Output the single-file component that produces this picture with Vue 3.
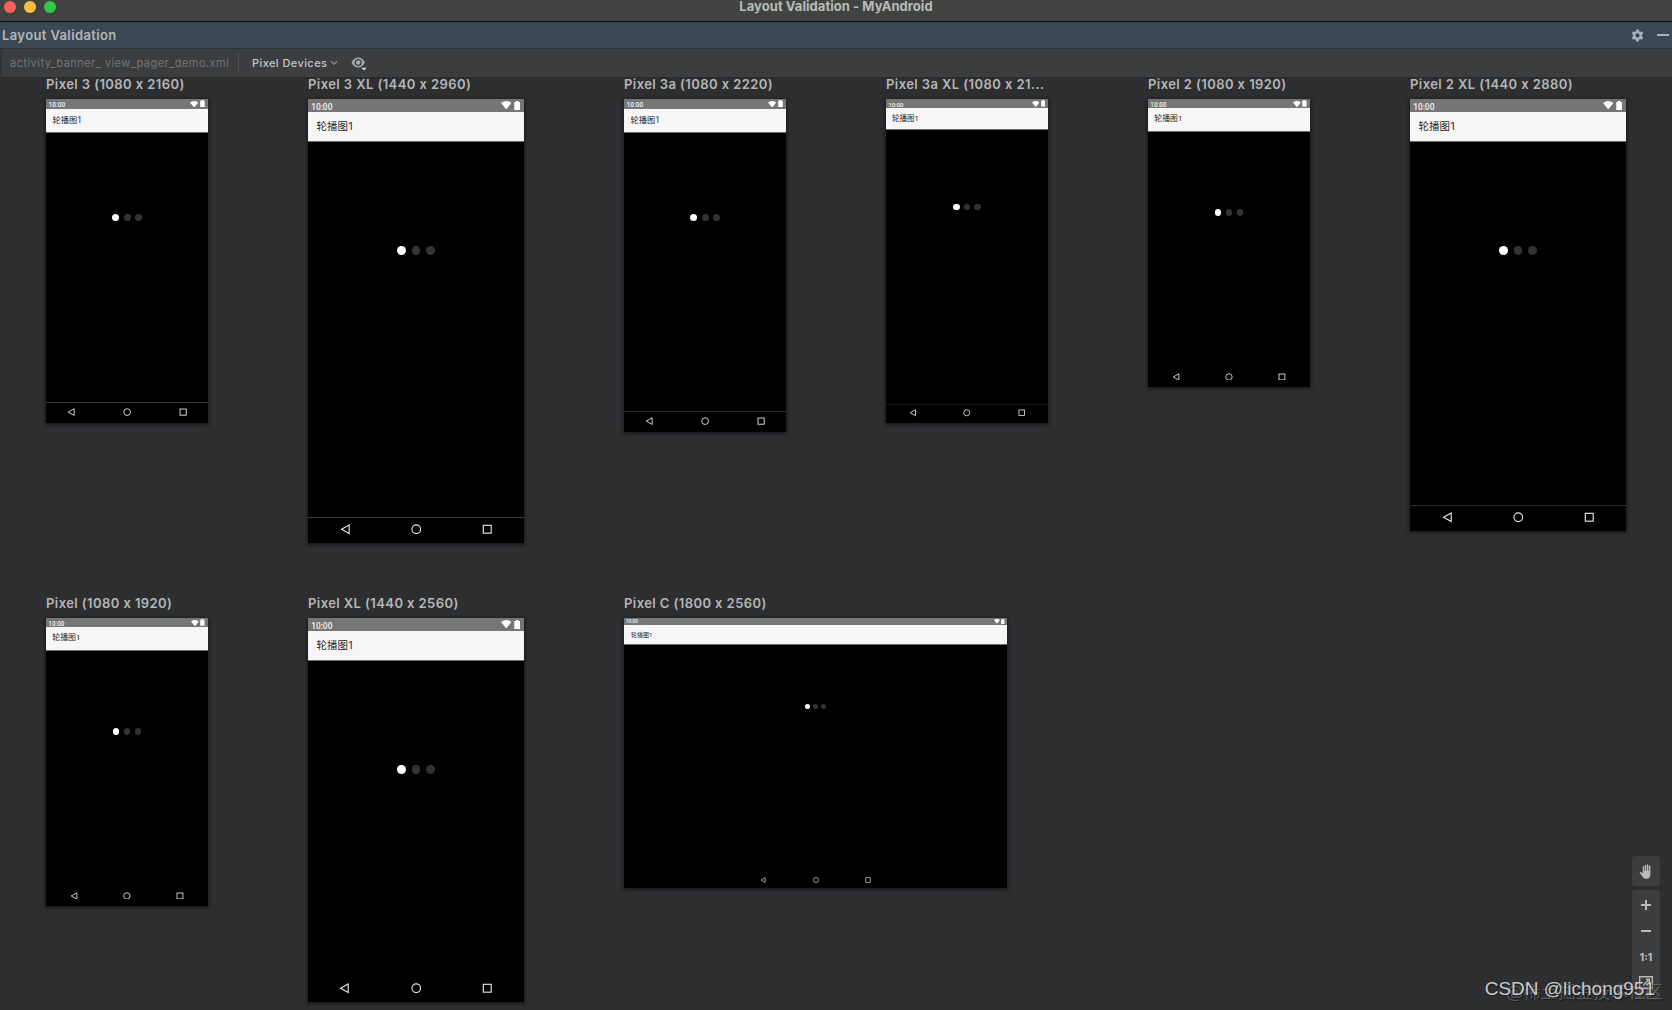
<!-- src/App.vue -->
<script setup>
// dp: 1dp in preview pixels, side: distance from the home button to back / recents
const rows = [
  [
    { name: 'Pixel 3 (1080 x 2160)', width: 162, height: 324, dp: 0.412, side: 56.3, line: '#3a3a3a' },
    { name: 'Pixel 3 XL (1440 x 2960)', width: 216, height: 444, dp: 0.525, side: 70.8, line: '#3a3a3a' },
    { name: 'Pixel 3a (1080 x 2220)', width: 162, height: 333, dp: 0.412, side: 56.3, line: '#2c2c2c' },
    { name: 'Pixel 3a XL (1080 x 21...', width: 162, height: 324, dp: 0.375, side: 54.7, line: '#161616' },
    { name: 'Pixel 2 (1080 x 1920)', width: 162, height: 288, dp: 0.394, side: 53.3 },
    { name: 'Pixel 2 XL (1440 x 2880)', width: 216, height: 432, dp: 0.525, side: 71, line: '#2c2c2c' }
  ],
  [
    { name: 'Pixel (1080 x 1920)', width: 162, height: 288, dp: 0.394, side: 53.3 },
    { name: 'Pixel XL (1440 x 2560)', width: 216, height: 384, dp: 0.525, side: 71.3 },
    { name: 'Pixel C (1800 x 2560)', width: 383, height: 270, dp: 0.3, side: 52.8, bar: 64, inset: 23 }
  ]
]

const deviceVars = (d) => ({
  '--w': d.width + 'px',
  '--h': d.height + 'px',
  '--dp': d.dp + 'px',
  '--bar': d.bar || 56,
  '--inset': d.inset || 16,
  '--side': d.side + 'px',
  '--line': d.line || 'transparent'
})
</script>

<template>
  <div class="window">
    <header class="titlebar">
      <div class="lights">
        <i class="light red"></i>
        <i class="light yellow"></i>
        <i class="light green"></i>
      </div>
      <span class="window-title">Layout Validation - MyAndroid</span>
    </header>

    <div class="tool-header">
      <span class="tool-title">Layout Validation</span>
      <div class="tool-actions">
        <svg class="gear" viewBox="0 0 24 24">
          <path fill-rule="evenodd" d="M9.6 1h4.8l.6 3.3 2 1.1 3.1-1.1 2.4 4.1-2.5 2.2v2.8l2.5 2.2-2.4 4.1-3.1-1.1-2 1.1-.6 3.3H9.6L9 19.700l-2-1.100-3.100 1.100-2.400-4.100L4 13.400v-2.800L1.500 8.400l2.400-4.100L7 5.400l2-1.100zM12 8a4 4 0 1 0 0 8 4 4 0 0 0 0-8z" />
        </svg>
        <i class="hide"></i>
      </div>
    </div>

    <div class="toolbar">
      <span class="file">activity_banner_ view_pager_demo.xml</span>
      <i class="separator"></i>
      <span class="devices">Pixel Devices</span>
      <svg class="chevron" viewBox="0 0 8 6"><path d="M1 1.200l3 3 3-3" /></svg>
      <svg class="eye" viewBox="0 0 17 15">
        <path fill-rule="evenodd" d="M0.500 6.500C2 3 4.600 1.400 7.200 1.400S12.400 3 13.900 6.500c-1.500 3.500-4.100 5.100-6.700 5.100S2 10 .5 6.500zM7.200 2.900a3.600 3.600 0 1 0 0 7.200 3.600 3.600 0 0 0 0-7.200z" />
        <circle cx="7.200" cy="6.500" r="2.300" />
        <path class="eye-arrow" d="M10.300 11.700h5.400L13 14.500z" />
      </svg>
    </div>

    <main class="canvas">
      <div v-for="(row, i) in rows" :key="i" class="row">
        <section v-for="d in row" :key="d.name" class="device" :style="deviceVars(d)">
          <h4>{{ d.name }}</h4>
          <div class="screen">
            <div class="status">
              <span class="time">10:00</span>
              <svg class="wifi" viewBox="0 0 16 13"><path d="M8 13L0 3Q8-3 16 3z" /></svg>
              <svg class="battery" viewBox="0 0 9 14"><path d="M2.500 0h4v1.500H9V14H0V1.500h2.500z" /></svg>
            </div>
            <div class="appbar">轮播图1</div>
            <div class="content">
              <i class="dot active"></i>
              <i class="dot"></i>
              <i class="dot"></i>
            </div>
            <div class="nav">
              <svg viewBox="0 0 20 20"><path d="M17.500 2v16L3 10z" /></svg>
              <svg viewBox="0 0 20 20"><circle cx="10" cy="10" r="8.200" /></svg>
              <svg viewBox="0 0 20 20"><rect x="2.500" y="2.500" width="15" height="15" /></svg>
            </div>
          </div>
        </section>
      </div>
    </main>

    <!-- 화면 이동 / 확대 컨트롤 -->
    <div class="controls">
      <div class="control-group">
        <svg class="hand" viewBox="0 0 14 15">
          <path d="M3.800 9V2.700q0-.7.700-.7t.7.700V7h.6V1.400q0-.7.700-.7t.7.700V7h.6V.9q0-.7.700-.7t.7.700V7h.6V2.300q0-.7.800-.7t.8.700v8.200c0 2.800-1.500 4.300-4 4.300-2 0-3-.9-4-2.300L.5 8.600c.5-.8 1.300-.7 1.900-.2z" />
        </svg>
      </div>
      <div class="control-group zoom">
        <svg viewBox="0 0 12 12"><path d="M1 6h10M6 1v10" /></svg>
        <svg viewBox="0 0 12 12"><path d="M1 6h10" /></svg>
        <span>1:1</span>
        <svg class="fit" viewBox="0 0 14 13"><path d="M.7.700h12.600v11.600H.700zM4 9.500l6-6M7 3.300h3.300v3.300" /></svg>
      </div>
    </div>

    <div class="mark mark-back">@稀土掘金技术社区</div>
    <div class="mark mark-front">CSDN @lichong951</div>
  </div>
</template>

<style>
body { margin: 0; background: #2d2e30; }
</style>

<style scoped>
.window {
  position: relative;
  display: flex;
  flex-direction: column;
  width: 1672px;
  height: 1010px;
  overflow: hidden;
  background: #2d2e30;
  color: #b4b6b8;
  font-family: Inter, "Noto Sans CJK SC", sans-serif;
}

/* === 타이틀바 === */
.titlebar {
  display: grid;
  grid-template-columns: 1fr auto 1fr;
  box-sizing: border-box;
  height: 22px;
  border-bottom: 1px solid #090a0a;
  background: #414341;
}
.lights { display: flex; gap: 8px; padding: 1px 0 0 4px; }
.light { width: 12px; height: 12px; border-radius: 50%; }
.red { background: #fc605c; }
.yellow { background: #fdbc40; }
.green { background: #34c84a; }
.window-title {
  font-size: 13px;
  font-weight: 700;
  line-height: 13px;
  letter-spacing: .05px;
  color: #b9bbb9;
}

.tool-header {
  display: flex;
  align-items: center;
  justify-content: space-between;
  box-sizing: border-box;
  height: 27px;
  padding: 0 3px 0 2px;
  border-bottom: 1px solid #2e3235;
  background: #3b4753;
}
.tool-title { font-size: 13px; font-weight: 600; letter-spacing: .38px; line-height: 26px; }
.tool-actions { display: flex; align-items: center; gap: 13px; }
.gear { width: 13px; height: 13px; fill: #a9b2bc; }
.hide { width: 12px; height: 2px; background: #a9b2bc; }

.toolbar {
  display: flex;
  align-items: center;
  box-sizing: border-box;
  height: 29px;
  border-left: 2px solid #323335;
  border-bottom: 1px solid #292a2b;
  background: #3c3d3f;
  font-size: 11px;
  letter-spacing: .5px;
}
.file { width: 220px; margin-left: 8px; color: #737577; letter-spacing: .47px; white-space: nowrap; }
.separator { width: 1px; height: 20px; margin: 0 13px 0 8px; background: #4c4e50; }
.devices { width: 75px; color: #c4c6c8; font-weight: 500; letter-spacing: .42px; white-space: nowrap; }
.chevron { width: 8px; height: 6px; margin-left: 3px; fill: none; stroke: #85888a; stroke-width: 1.4; }
.eye { width: 17px; height: 15px; margin: 1px 0 0 13px; fill: #a6a9ab; }
.eye-arrow { fill: #d5d7d8; }

/* === 디바이스 목록 === */
.canvas {
  display: flex;
  flex-direction: column;
  gap: 54px;
  padding: 0 46px;
}
.row { display: flex; align-items: flex-start; gap: 100px; }
.device { width: var(--w); flex: none; }
.device h4 {
  margin: 0;
  height: 21px;
  font-size: 13px;
  font-weight: 600;
  line-height: 13px;
  letter-spacing: .42px;
  white-space: nowrap;
}
.screen {
  display: flex;
  flex-direction: column;
  height: var(--h);
  background: #000;
  box-shadow: 0 1px 3px 1px rgba(15, 16, 17, .65);
}
.status {
  display: flex;
  align-items: center;
  height: calc(var(--dp) * 24);
  padding: 0 calc(var(--dp) * 8) 0 calc(var(--dp) * 6);
  background: #767676;
}
.time {
  margin: calc(var(--dp) * 8) auto 0 0;
  color: #f2f2f2;
  font-family: Roboto, sans-serif;
  font-size: calc(var(--dp) * 16);
  font-weight: 500;
  line-height: 1;
}
.wifi { width: calc(var(--dp) * 20); height: calc(var(--dp) * 16); fill: #fff; }
.battery { width: calc(var(--dp) * 12); height: calc(var(--dp) * 17); margin-left: calc(var(--dp) * 4); fill: #fff; }
.appbar {
  height: calc(var(--dp) * var(--bar));
  padding-left: calc(var(--dp) * var(--inset));
  background: #f6f6f6;
  box-shadow: 0 1px 0 #6b6b6b;
  color: #262626;
  font-family: Roboto, "Noto Sans CJK SC", sans-serif;
  font-size: calc(var(--dp) * 20);
  font-weight: 400;
  line-height: calc(var(--dp) * (var(--bar) + 2));
}
.content {
  display: flex;
  flex: 1;
  justify-content: center;
  gap: calc(var(--dp) * 11);
  padding-top: calc(var(--dp) * 200);
}
.dot {
  width: calc(var(--dp) * 17);
  height: calc(var(--dp) * 17);
  border-radius: 50%;
  background: #333;
}
.dot.active { background: #fff; }
.nav {
  display: flex;
  align-items: center;
  justify-content: center;
  gap: calc(var(--side) - var(--dp) * 20);
  box-sizing: border-box;
  height: calc(var(--dp) * 48 + 1px);
  padding-bottom: 1px;
  box-shadow: inset 0 1px 0 var(--line);
}
.nav svg {
  width: calc(var(--dp) * 20);
  height: calc(var(--dp) * 20);
  fill: none;
  stroke: #e4e4e4;
  stroke-width: 2.2;
}

/* === 오른쪽 아래 컨트롤 === */
.controls {
  position: absolute;
  right: 12px;
  bottom: 10px;
  display: flex;
  flex-direction: column;
  gap: 4px;
}
.control-group {
  display: flex;
  flex-direction: column;
  align-items: center;
  justify-content: center;
  width: 28px;
  height: 30px;
  border-radius: 4px;
  background: #3c3d3f;
}
.hand { width: 14px; height: 15px; fill: #b8b9ba; }
.zoom {
  justify-content: flex-start;
  box-sizing: border-box;
  height: 110px;
  padding-top: 9px;
  gap: 14px;
}
.zoom svg { width: 12px; height: 12px; fill: none; stroke: #b8b9ba; stroke-width: 2; }
.zoom span { font-size: 10px; font-weight: 800; line-height: 12px; color: #b8b9ba; }
.zoom .fit { width: 14px; height: 13px; margin-top: -1px; stroke-width: 1.4; }

/* 워터마크 */
.mark { position: absolute; line-height: 24px; white-space: nowrap; }
.mark-back {
  right: 9px;
  bottom: 6px;
  color: rgba(140, 140, 140, .5);
  font-size: 17.5px;
  text-shadow: 1px 1px 1px rgba(0, 0, 0, .5);
}
.mark-front {
  right: 17px;
  bottom: 9px;
  color: #c9cacb;
  font-family: "Liberation Sans", sans-serif;
  font-size: 19px;
  text-shadow: 1px 1px 1px rgba(0, 0, 0, .4);
}
</style>
